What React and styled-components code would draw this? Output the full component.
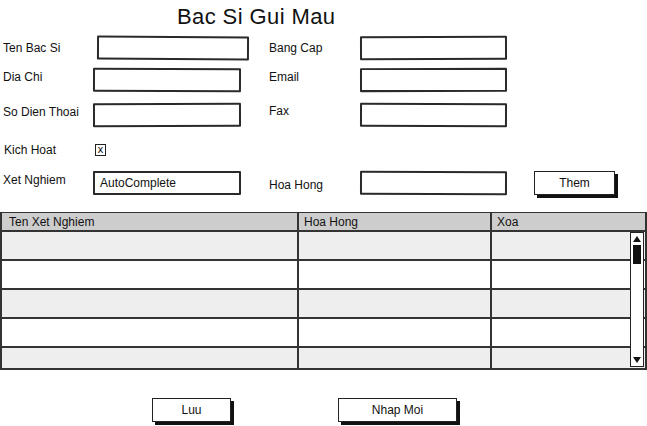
import React from 'react';
import styled, { createGlobalStyle } from 'styled-components';

const GlobalStyle = createGlobalStyle`
  body {
    margin: 0;
    background: #fff;
    font-family: "Liberation Sans", Arial, sans-serif;
    color: #111;
  }
`;

const Page = styled.div`
  width: 647px;
  height: 426px;
  overflow: hidden;
  position: relative;
`;

const Title = styled.h1`
  margin: 0;
  padding: 4px 0 0 177px;
  height: 32px;
  box-sizing: border-box;
  font-size: 22px;
  font-weight: normal;
  letter-spacing: 0.4px;
`;

const Form = styled.div`
  display: flex;
  flex-direction: column;
`;

const Row = styled.div`
  display: grid;
  grid-template-columns: 93px 148px 28px 91px 147px 27px 84px;
  align-items: center;
  height: ${p => p.$h}px;
  margin-top: ${p => p.$top}px;
`;

const Label = styled.span`
  font-size: 12px;
  margin-left: ${p => (p.$ml ?? 3)}px;
  position: relative;
  top: ${p => p.$dy || 0}px;
  white-space: nowrap;
`;

const Input = styled.div`
  height: 24px;
  box-sizing: border-box;
  border: 2px solid #2a2a2a;
  border-radius: 1px;
  background: #fff;
  margin-left: ${p => p.$ml || 0}px;
  margin-right: ${p => p.$mr || 0}px;
  font-size: 12px;
  line-height: 20px;
  padding-left: 5px;
  transform: rotate(${p => p.$rot || 0}deg);
`;

const Check = styled.div`
  width: 11px;
  height: 12px;
  box-sizing: border-box;
  border: 1.5px solid #222;
  margin-left: 2px;
  font-size: 10px;
  line-height: 9px;
  text-align: center;
  font-family: "DejaVu Sans", sans-serif;
`;

const Button = styled.div`
  height: 24px;
  box-sizing: border-box;
  border: 1.5px solid #222;
  background: #fff;
  box-shadow: 3px 3px 0 #111;
  font-size: 12px;
  display: flex;
  align-items: center;
  justify-content: center;
  width: ${p => p.$w}px;
`;

const Table = styled.div`
  margin-top: 17px;
  height: 158px;
  box-sizing: border-box;
  border: 2px solid #333;
  border-top-width: 1px;
  position: relative;
  overflow: hidden;
`;

const HeadRow = styled.div`
  display: grid;
  grid-template-columns: 295px 193px 1fr;
  height: 17px;
  background: #cdcdcd;
  border-bottom: 2px solid #333;
`;

const HeadCell = styled.div`
  font-size: 12px;
  line-height: 19px;
  padding-left: ${p => p.$pl || 5}px;
  border-left: ${p => (p.$first ? 'none' : '2px solid #333')};
`;

const BodyRow = styled.div`
  display: grid;
  grid-template-columns: 295px 193px 1fr;
  height: 27px;
  background: ${p => (p.$alt ? '#eeeeee' : '#ffffff')};
  border-bottom: 2px solid #333;
`;

const Cell = styled.div`
  border-left: ${p => (p.$first ? 'none' : '2px solid #333')};
`;

const Scroll = styled.div`
  position: absolute;
  right: 1px;
  top: 19px;
  bottom: 1px;
  width: 12px;
  background: #fff;
  border: 1.5px solid #222;
  display: flex;
  flex-direction: column;
  align-items: center;
`;

const Arrow = styled.div`
  width: 0;
  height: 0;
  border-left: 4px solid transparent;
  border-right: 4px solid transparent;
  ${p => (p.$down ? 'border-top: 6px solid #111;' : 'border-bottom: 6px solid #111;')}
  margin: 3px 0;
  ${p => (p.$down ? 'margin-top: auto;' : '')}
`;

const Thumb = styled.div`
  width: 8px;
  height: 19px;
  background: #111;
`;

const Footer = styled.div`
  display: flex;
  margin-top: 28px;
  padding-left: 152px;
  gap: 107px;
`;

export default function App() {
  const rows = [true, false, true, false, true];
  return (
    <Page>
      <GlobalStyle />
      <Title>Bac Si Gui Mau</Title>
      <Form>
        <Row $h={24} $top={4}>
          <Label>Ten Bac Si</Label>
          <Input $ml={4} $mr={-8} $rot={0.3} />
          <span />
          <Label $ml={0}>Bang Cap</Label>
          <Input $rot={-0.2} />
        </Row>
        <Row $h={24} $top={8}>
          <Label $dy={-3}>Dia Chi</Label>
          <Input $rot={0.2} />
          <span />
          <Label $ml={0} $dy={-3}>Email</Label>
          <Input $rot={-0.1} />
        </Row>
        <Row $h={24} $top={11}>
          <Label $dy={-3}>So Dien Thoai</Label>
          <Input $rot={-0.2} />
          <span />
          <Label $ml={0} $dy={-4}>Fax</Label>
          <Input $rot={0.2} />
        </Row>
        <Row $h={24} $top={11}>
          <Label $ml={4}>Kich Hoat</Label>
          <Check>x</Check>
        </Row>
        <Row $h={24} $top={9}>
          <Label $dy={-3}>Xet Nghiem</Label>
          <Input>AutoComplete</Input>
          <span />
          <Label $ml={0} $dy={2}>Hoa Hong</Label>
          <Input $rot={0.2} />
          <span />
          <Button $w={81}>Them</Button>
        </Row>
      </Form>
      <Table>
        <HeadRow>
          <HeadCell $first $pl={7}>Ten Xet Nghiem</HeadCell>
          <HeadCell>Hoa Hong</HeadCell>
          <HeadCell>Xoa</HeadCell>
        </HeadRow>
        {rows.map((alt, i) => (
          <BodyRow key={i} $alt={alt}>
            <Cell $first />
            <Cell />
            <Cell />
          </BodyRow>
        ))}
        <Scroll>
          <Arrow />
          <Thumb />
          <Arrow $down />
        </Scroll>
      </Table>
      <Footer>
        <Button $w={79}>Luu</Button>
        <Button $w={119}>Nhap Moi</Button>
      </Footer>
    </Page>
  );
}
